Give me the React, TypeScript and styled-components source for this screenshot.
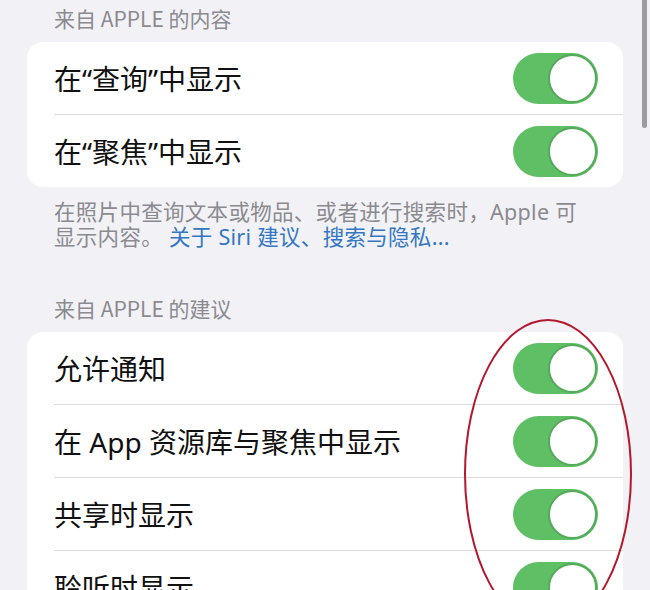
import React from 'react';
import styled, { createGlobalStyle } from 'styled-components';

const GlobalStyle = createGlobalStyle`
  html, body {
    margin: 0;
    padding: 0;
    background: #f2f2f6;
    overflow: hidden;
  }
  body {
    font-family: "Noto Sans", "Noto Sans CJK SC", sans-serif;
  }
`;

const Page = styled.div`
  position: relative;
  width: 650px;
  height: 590px;
  overflow: hidden;
  padding: 0 27px;
  box-sizing: border-box;
  background: #f2f2f6;
`;

const SectionHeader = styled.div<{ $top: number }>`
  margin-top: ${(p) => p.$top}px;
  margin-bottom: 11px;
  padding-left: 27px;
  font-family: "Noto Sans CJK SC", sans-serif;
  font-size: 21px;
  line-height: 26px;
  color: #8a8a8f;
`;

const Card = styled.div`
  background: #ffffff;
  border-radius: 16px;
  overflow: hidden;
`;

const Row = styled.div<{ $last?: boolean }>`
  display: flex;
  align-items: center;
  justify-content: space-between;
  height: 72px;
  margin-left: 27px;
  padding-right: 25px;
  border-bottom: ${(p) => (p.$last ? 'none' : '1px solid #dcdce0')};
`;

const Label = styled.span`
  font-size: 28px;
  color: #111111;
`;

const Track = styled.div<{ $on: boolean }>`
  flex: none;
  display: flex;
  justify-content: ${(p) => (p.$on ? 'flex-end' : 'flex-start')};
  align-items: center;
  width: 85px;
  height: 51px;
  border-radius: 26px;
  background: ${(p) => (p.$on ? '#5ebf64' : '#e6e6ea')};
  box-sizing: border-box;
  padding: 1px;
`;

const Thumb = styled.div`
  width: 49px;
  height: 49px;
  border-radius: 50%;
  background: #ffffff;
  border: 2px solid #55a95b;
  box-sizing: border-box;
`;

const Footer = styled.p`
  margin: 0;
  padding: 12px 27px 0;
  font-size: 21.5px;
  line-height: 25px;
  letter-spacing: 0.3px;
  color: #8a8a8f;
  white-space: nowrap;
`;

const Link = styled.span`
  color: #3376c4;
`;

const Scrollbar = styled.div`
  position: absolute;
  top: -6px;
  right: 3px;
  width: 5px;
  height: 134px;
  border-radius: 3px;
  background: #9c9ca0;
`;

const Mark = styled.svg`
  position: absolute;
  left: 0;
  top: 0;
  pointer-events: none;
`;

const Toggle = ({ on = true }: { on?: boolean }) => (
  <Track $on={on}>
    <Thumb />
  </Track>
);

const contentRows = ['在“查询”中显示', '在“聚焦”中显示'];
const suggestionRows = ['允许通知', '在 App 资源库与聚焦中显示', '共享时显示', '聆听时显示'];

export default function App() {
  return (
    <>
      <GlobalStyle />
      <Page>
        <SectionHeader $top={5}>来自 APPLE 的内容</SectionHeader>
        <Card>
          {contentRows.map((label, i) => (
            <Row key={label} $last={i === contentRows.length - 1}>
              <Label>{label}</Label>
              <Toggle />
            </Row>
          ))}
        </Card>
        <Footer>
          在照片中查询文本或物品、或者进行搜索时，Apple 可
          <br />
          显示内容。 <Link>关于 Siri 建议、搜索与隐私...</Link>
        </Footer>
        <SectionHeader $top={46}>来自 APPLE 的建议</SectionHeader>
        <Card>
          {suggestionRows.map((label, i) => (
            <Row key={label} $last={i === suggestionRows.length - 1}>
              <Label>{label}</Label>
              <Toggle />
            </Row>
          ))}
        </Card>
        <Scrollbar />
        <Mark width="650" height="590" viewBox="0 0 650 590">
          <ellipse
            cx="548"
            cy="474"
            rx="83"
            ry="154"
            fill="none"
            stroke="#b3182c"
            strokeWidth="2"
          />
        </Mark>
      </Page>
    </>
  );
}
